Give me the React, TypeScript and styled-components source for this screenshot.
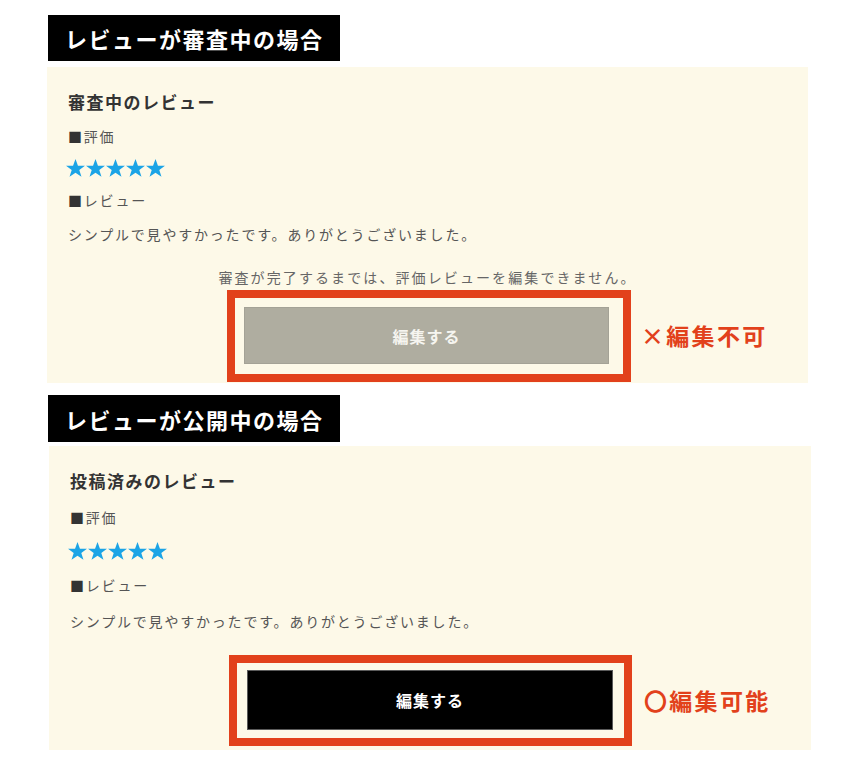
import React from "react";
import styled, { createGlobalStyle } from "styled-components";

const GlobalStyle = createGlobalStyle`
  html, body { margin: 0; padding: 0; background: #ffffff; }
  body {
    font-family: "Noto Sans CJK JP", "Noto Sans", sans-serif;
    color: #555555;
  }
`;

const Page = styled.div`
  display: flex;
  flex-direction: column;
  padding: 15px 0 0 47px;
`;

const Section = styled.section<{ $top: number }>`
  display: flex;
  flex-direction: column;
  margin-top: ${(p) => p.$top}px;
`;

const Heading = styled.h2<{ $h: number }>`
  margin: 0 0 0 1px;
  width: 292px;
  height: ${(p) => p.$h}px;
  box-sizing: border-box;
  padding-left: 17px;
  display: flex;
  align-items: center;
  background: #000000;
  color: #ffffff;
  font-size: 22px;
  font-weight: 700;
  letter-spacing: 1.5px;
  line-height: 1;
`;

const Panel = styled.div<{
  $mt: number;
  $ml: number;
  $w: number;
  $pt: number;
  $pb: number;
  $gap: number;
}>`
  margin-top: ${(p) => p.$mt}px;
  margin-left: ${(p) => p.$ml}px;
  width: ${(p) => p.$w}px;
  box-sizing: border-box;
  padding: ${(p) => p.$pt}px 21px ${(p) => p.$pb}px;
  background: #fdf9e8;
  display: flex;
  flex-direction: column;
  gap: ${(p) => p.$gap}px;
`;

const Title = styled.h3`
  margin: 0;
  font-size: 17px;
  font-weight: 700;
  letter-spacing: 1.5px;
  line-height: 24px;
  color: #333333;
`;

const Label = styled.div`
  font-size: 14px;
  line-height: 22px;
  letter-spacing: 1.8px;
  color: #555555;
`;

const Square = styled.span`
  color: #333333;
`;

const Stars = styled.div`
  display: flex;
  align-items: center;
  gap: 1px;
  height: 20px;
  margin-left: -2px;
`;

const Body = styled.p`
  margin: 0;
  font-size: 14px;
  line-height: 24px;
  letter-spacing: 1.8px;
  color: #555555;
`;

const Footer = styled.div<{ $extra: number }>`
  display: flex;
  flex-direction: column;
  align-items: center;
  gap: 2px;
  margin-top: ${(p) => p.$extra}px;
`;

const Notice = styled.p`
  margin: 0;
  font-size: 14px;
  line-height: 22px;
  letter-spacing: 2.1px;
  color: #666666;
  text-align: center;
`;

const Highlight = styled.div<{ $pad: string; $shift: number }>`
  position: relative;
  border: 8px solid #e2411b;
  padding: ${(p) => p.$pad};
  margin-left: ${(p) => p.$shift}px;
  display: flex;
`;

const EditButton = styled.button<{ $disabled?: boolean; $w: number; $h: number }>`
  width: ${(p) => p.$w}px;
  height: ${(p) => p.$h}px;
  box-sizing: border-box;
  margin: 0;
  padding: 0;
  border: 1px solid ${(p) => (p.$disabled ? "#a4a296" : "#5a5a5a")};
  background: ${(p) => (p.$disabled ? "#afada0" : "#000000")};
  color: ${(p) => (p.$disabled ? "#f6f5f0" : "#ffffff")};
  font-family: "Noto Sans CJK JP", "Noto Sans", sans-serif;
  font-size: 16px;
  font-weight: 700;
  letter-spacing: 1px;
  cursor: ${(p) => (p.$disabled ? "default" : "pointer")};
`;

const Annotation = styled.span<{ $gap: number }>`
  position: absolute;
  left: calc(100% + ${(p) => p.$gap}px);
  top: 50%;
  transform: translateY(-52%);
  white-space: nowrap;
  color: #e2411b;
  font-size: 23px;
  font-weight: 700;
  letter-spacing: 2.3px;
  line-height: 1;
`;

const Star = () => (
  <svg width="19" height="18" viewBox="0 0 20 19" aria-hidden="true">
    <path
      d="M10 0 L12.6 7 L20 7 L14 11.5 L16.3 18.8 L10 14.4 L3.7 18.8 L6 11.5 L0 7 L7.4 7 Z"
      fill="#1ba4e6"
    />
  </svg>
);

const Rating = () => (
  <Stars>
    {[0, 1, 2, 3, 4].map((i) => (
      <Star key={i} />
    ))}
  </Stars>
);

export default function App() {
  return (
    <>
      <GlobalStyle />
      <Page>
        <Section $top={0}>
          <Heading $h={46}>レビューが審査中の場合</Heading>
          <Panel $mt={6} $ml={0} $w={761} $pt={23} $pb={1} $gap={11}>
            <Title>審査中のレビュー</Title>
            <Label>
              <Square>■</Square>評価
            </Label>
            <Rating />
            <Label>
              <Square>■</Square>レビュー
            </Label>
            <Body>シンプルで見やすかったです。ありがとうございました。</Body>
            <Footer $extra={9}>
              <Notice>審査が完了するまでは、評価レビューを編集できません。</Notice>
              <Highlight $pad="9px 14px 10px 9px" $shift={3}>
                <EditButton $disabled $w={365} $h={57} disabled>
                  編集する
                </EditButton>
                <Annotation $gap={18}>×編集不可</Annotation>
              </Highlight>
            </Footer>
          </Panel>
        </Section>
        <Section $top={12}>
          <Heading $h={47}>レビューが公開中の場合</Heading>
          <Panel $mt={4} $ml={2} $w={762} $pt={23} $pb={4} $gap={13}>
            <Title>投稿済みのレビュー</Title>
            <Label>
              <Square>■</Square>評価
            </Label>
            <Rating />
            <Label>
              <Square>■</Square>レビュー
            </Label>
            <Body>シンプルで見やすかったです。ありがとうございました。</Body>
            <Footer $extra={9}>
              <Highlight $pad="7px 11px 8px 10px" $shift={1}>
                <EditButton $w={366} $h={60}>編集する</EditButton>
                <Annotation $gap={20}>〇編集可能</Annotation>
              </Highlight>
            </Footer>
          </Panel>
        </Section>
      </Page>
    </>
  );
}
